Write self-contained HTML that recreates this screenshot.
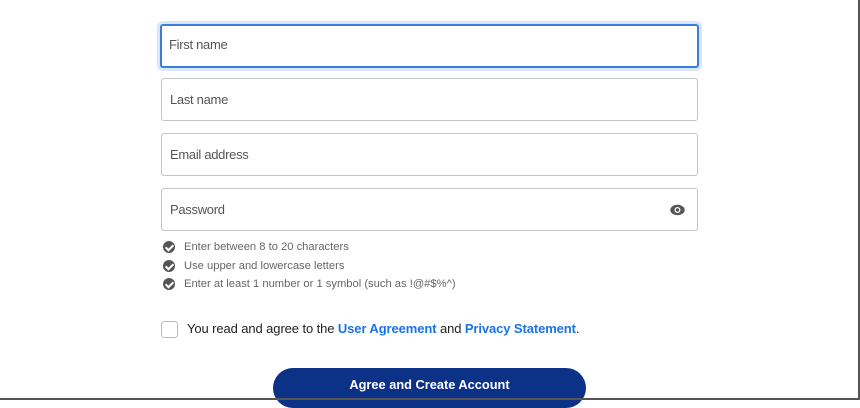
<!DOCTYPE html>
<html><head><style>
body{margin:0;width:860px;height:400px;background:#fff;position:relative;overflow:hidden;font-family:"Liberation Sans",Arial,sans-serif}
.f{position:absolute;left:161px;width:535px;height:41px;border:1px solid #c4c4c4;border-radius:3px;box-sizing:content-box}
.f span{position:absolute;left:8px;top:13px;font-size:13px;letter-spacing:-0.3px;color:#555}
.fo{border:2px solid #3a7de0;left:160px;width:535px;height:40px;box-shadow:0 0 0 3px #d8e8fa}
.c{position:absolute;left:163px;font-size:11.2px;color:#666}
.c i{position:absolute;left:0;top:0;width:12px;height:12px;border-radius:50%;background:#555}
.c i:after{content:"";position:absolute;left:4px;top:2px;width:3px;height:6px;border:solid #fff;border-width:0 2px 2px 0;transform:rotate(45deg)}
.c b{font-weight:normal;position:absolute;left:21px;top:0px;white-space:nowrap}
a{color:#1a73e8;font-weight:bold;text-decoration:none}
</style></head><body>
<div class="f fo" style="top:24px"><span style="left:7px;top:11px">First name</span></div>
<div class="f" style="top:78px"><span>Last name</span></div>
<div class="f" style="top:133px"><span>Email address</span></div>
<div class="f" style="top:188px"><span>Password</span>
<svg style="position:absolute;left:508px;top:15px" width="15" height="12" viewBox="0 0 15 12"><ellipse cx="7.5" cy="6" rx="7.2" ry="5.2" fill="#555"/><circle cx="7.5" cy="6" r="3" fill="#fff"/><circle cx="7.5" cy="6" r="1.7" fill="#555"/></svg></div>
<div class="c" style="top:241px"><i></i><b>Enter between 8 to 20 characters</b></div>
<div class="c" style="top:260px"><i></i><b>Use upper and lowercase letters</b></div>
<div class="c" style="top:278px"><i></i><b>Enter at least 1 number or 1 symbol (such as !@#$%^)</b></div>
<div style="position:absolute;left:161px;top:321px;width:15px;height:15px;border:1px solid #bbb;border-radius:3px"></div>
<div style="position:absolute;left:187px;top:321px;font-size:13px;letter-spacing:-0.1px;color:#222;white-space:nowrap">You read and agree to the <a>User Agreement</a> and <a>Privacy Statement</a>.</div>
<div style="position:absolute;left:273px;top:368px;width:313px;height:40px;border-radius:20px;background:#0b3287;color:#fff;font-weight:bold;font-size:12.8px;text-align:center;line-height:33px">Agree and Create Account</div>
<div style="position:absolute;right:0;top:0;width:2px;height:400px;background:#555;z-index:5"></div>
<div style="position:absolute;left:0;bottom:0;width:860px;height:2px;background:#555;z-index:5"></div>
</body></html>
